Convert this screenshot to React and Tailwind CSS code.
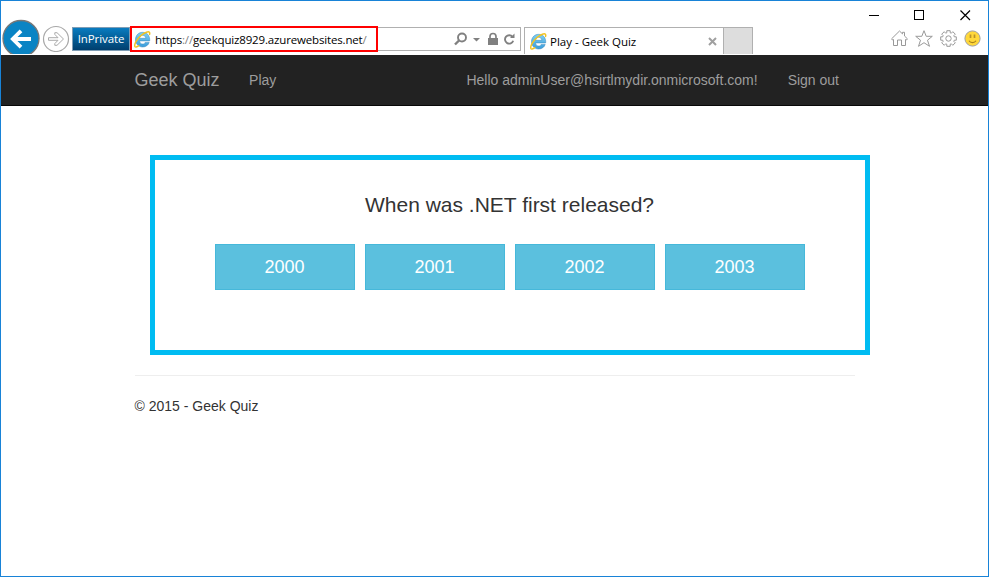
import React from "react";

const UI_FONT = "font-['Open_Sans','Noto_Sans',sans-serif]";

function IeLogo() {
  return (
    <svg width="17" height="17" viewBox="0 0 17 17" className="block shrink-0">
      <defs>
        <linearGradient id="ie" x1="0" y1="0" x2="0" y2="1">
          <stop offset="0" stopColor="#7fd0f2" />
          <stop offset="1" stopColor="#3a9ddb" />
        </linearGradient>
      </defs>
      <path
        d="M8.600 1.300C4.500 1.300 1.500 4.500 1.500 8.600S4.500 16 8.600 16C11.900 16 14.300 14.200 15.200 11.400H11.200C10.700 12.500 9.800 13 8.800 13C7.100 13 5.600 11.800 5.500 9.900H15.700C16.100 4.900 13.200 1.300 8.600 1.300ZM5.500 7.300C5.800 5.400 7.100 4.300 8.700 4.300C10.400 4.300 11.600 5.400 11.900 7.300Z"
        fill="url(#ie)"
        stroke="#3587bb"
        strokeWidth=".5"
      />
      <path
        d="M4.800 14.700C2.800 16.200 1.200 16.500.8 15.200C.2 13 3.200 7.800 7.300 4.300C11 1.200 14.500.1 15.400 1.300C15.800 1.800 15.800 2.600 15.500 3.400"
        fill="none"
        stroke="#f3c322"
        strokeWidth="1.500"
        strokeLinecap="round"
      />
    </svg>
  );
}

function BackButton() {
  return (
    <svg width="40" height="35" viewBox="0 0 40 35" className="block shrink-0">
      <circle cx="20" cy="19.500" r="18" fill="#0a84c4" stroke="#777" strokeWidth="1.300" />
      <path d="M30 20H13.500M20 11.800L11.800 20L20 28.200" fill="none" stroke="#fff" strokeWidth="3.800" />
    </svg>
  );
}

function ForwardButton() {
  return (
    <svg width="28" height="28" viewBox="0 0 28 28" className="block shrink-0">
      <circle cx="14" cy="15" r="12.500" fill="#fff" stroke="#a8a8a8" strokeWidth="1.200" />
      <path
        d="M6.500 13.700H16L12.800 10.400V8.700H15L21.500 15L15 21.300H12.800V19.600L16 16.300H6.500Z"
        fill="#fff"
        stroke="#aaa"
        strokeWidth="1"
      />
    </svg>
  );
}

function AddressIcons() {
  return (
    <svg width="66" height="22" viewBox="0 0 66 22" className="block shrink-0" fill="none" stroke="#808080">
      <circle cx="8" cy="9.500" r="4" strokeWidth="1.900" />
      <path d="M5 12.500L1 16.500" strokeWidth="2.400" />
      <path d="M19 10H26L22.500 13.600Z" fill="#808080" stroke="none" />
      <rect x="34" y="10" width="10" height="7" fill="#808080" stroke="none" />
      <path d="M36 10.500V8.500A3 3 0 0 1 42 8.500V10.500" strokeWidth="1.700" />
      <path d="M58.500 8.800A4.200 4.200 0 1 0 59.200 12.800" strokeWidth="1.900" />
      <path d="M56 10H60.500V5.500Z" fill="#808080" stroke="none" />
    </svg>
  );
}

function WindowControls() {
  return (
    <svg width="102" height="12" viewBox="0 0 102 12" className="block" fill="none" stroke="#000" shapeRendering="crispEdges">
      <path d="M0 5.500H10" />
      <rect x="45.500" y=".5" width="9" height="9" />
      <path d="M91.500 .5L101 10M101 .5L91.500 10" shapeRendering="auto" strokeWidth="1.200" />
    </svg>
  );
}

function HomeIcon() {
  return (
    <svg width="17" height="17" viewBox="0 0 17 17" className="block" fill="none" stroke="#999">
      <path d="M2.500 9.500L1.300 9.900L.6 8.800L8.500 1L11.500 3.900V2.300H13.500V6L16.400 8.800L15.700 9.900L14.500 9.500V15.500H10.500V10H6.500V15.500H2.500Z" strokeLinejoin="round" />
    </svg>
  );
}

function StarIcon() {
  return (
    <svg width="18" height="17" viewBox="0 0 18 17" className="block" fill="none" stroke="#999">
      <path d="M9 .7L11.200 6.300H17.300L12.500 10.200L14.500 16.300L9 12.700L3.500 16.300L5.500 10.200L.7 6.300H6.800Z" strokeLinejoin="round" />
    </svg>
  );
}

function GearIcon() {
  return (
    <svg width="17" height="17" viewBox="0 0 17 17" className="block" fill="none" stroke="#999" strokeLinejoin="round">
      <path d="M6.800 .7H10.200V2.700L11.300 3.200L12.800 1.700L15.300 4.200L13.800 5.700L14.300 6.800H16.300V10.200H14.300L13.800 11.300L15.300 12.800L12.800 15.300L11.300 13.800L10.200 14.300V16.300H6.800V14.300L5.700 13.800L4.200 15.300L1.700 12.800L3.200 11.300L2.700 10.200H.7V6.800H2.700L3.200 5.700L1.700 4.200L4.200 1.700L5.700 3.200L6.800 2.700Z" />
      <circle cx="8.500" cy="8.500" r="2.700" />
    </svg>
  );
}

function SmileyIcon() {
  return (
    <svg width="17" height="17" viewBox="0 0 17 17" className="block">
      <circle cx="8.500" cy="8.500" r="7.600" fill="#ffd83b" stroke="#9f9f9f" />
      <path d="M6.500 4.500V8M10.500 4.500V8" stroke="#b9922a" strokeWidth="1.700" />
      <path d="M5 10.800C6.500 13.200 10.500 13.200 12 10.800" fill="none" stroke="#a8801c" strokeWidth="1.200" />
    </svg>
  );
}

function BrowserChrome() {
  return (
    <header className={`flex h-[54px] w-full justify-between bg-white ${UI_FONT}`}>
      <div className="flex h-[53px] pt-[18px]">
        <BackButton />
        <div className="pl-px pt-[5px]">
          <ForwardButton />
        </div>
        <div className="ml-[2px] mt-[8px] flex h-[24px] w-[58px] items-center justify-center border border-[#7f9db5] bg-gradient-to-b from-[#0a7cc0] to-[#003f6e] text-[11.500px] tracking-[-0.1px] text-white">
          InPrivate
        </div>
        <div className="relative mt-[8px] flex h-[24px] w-[391px] items-center justify-between border border-[#b0b0b0] pl-[3px]">
          <div className="flex items-center gap-[4px]">
            <IeLogo />
            <span className="mt-px whitespace-nowrap text-[11.500px] tracking-[-0.16px] text-black">
              https<span className="text-[#808080]">://</span>geekquiz8929.azurewebsites.net<span className="text-[#808080]">/</span>
            </span>
          </div>
          <AddressIcons />
          <div className="absolute -left-px -top-[2px] h-[26px] w-[248px] border-2 border-[#f00]" />
        </div>
        <div className="ml-[3px] mt-[8px] flex h-[27px] w-[200px] items-center border border-b-0 border-[#b0b0b0] pl-[5px] pr-[6px]">
          <IeLogo />
          <span className="ml-[3px] mt-[2px] flex-1 whitespace-nowrap text-[11.500px] text-black">Play - Geek Quiz</span>
          <svg width="9" height="9" viewBox="0 0 9 9" className="block" stroke="#a0a0a0" strokeWidth="2">
            <path d="M1 1L8 8M8 1L1 8" />
          </svg>
        </div>
        <div className="mt-[8px] h-[27px] w-[29px] border border-b-0 border-l-0 border-[#b0b0b0] bg-[#ddd]" />
      </div>
      <div className="flex flex-col items-end pt-[9px]">
        <div className="pr-[17px]">
          <WindowControls />
        </div>
        <div className="flex gap-[7px] pr-[7.500px] pt-[8px]">
          <HomeIcon />
          <StarIcon />
          <GearIcon />
          <SmileyIcon />
        </div>
      </div>
    </header>
  );
}

function SiteNav() {
  return (
    <nav className="flex h-[51px] items-center border-b border-[#080808] bg-[#222] pl-[133.500px] pr-[149px] text-[14px] leading-5 text-[#9d9d9d]">
      <span className="text-[18px]">Geek Quiz</span>
      <span className="ml-[29.500px] flex-1">Play</span>
      <span>Hello adminUser@hsirtlmydir.onmicrosoft.com!</span>
      <span className="ml-[30px]">Sign out</span>
    </nav>
  );
}

export default function App() {
  return (
    <div className="flex h-[577px] w-[989px] flex-col overflow-hidden border border-[#1883d7] bg-white font-['Liberation_Sans',Arial,sans-serif] text-[#333]">
      <BrowserChrome />
      <SiteNav />
      <main className="flex flex-col pl-[134px] pt-[49px]">
        <section className="ml-[15px] flex h-[200px] w-[720px] flex-col items-center border-[5px] border-[#00bcf2] pt-[31px]">
          <h1 className="pr-px text-[21px] leading-[28px]">When was .NET first released?</h1>
          <div className="mt-[25px] flex gap-[10px]">
            {["2000", "2001", "2002", "2003"].map((year) => (
              <button
                key={year}
                className="h-[46px] w-[140px] border border-[#46b8da] bg-[#5bc0de] pr-px text-[18px] leading-6 text-white"
              >
                {year}
              </button>
            ))}
          </div>
        </section>
        <hr className="mt-[20px] w-[720px] border-[#eee]" />
        <footer className="-ml-[0.500px] mt-[20px] text-[14px] leading-5">© 2015 - Geek Quiz</footer>
      </main>
    </div>
  );
}
